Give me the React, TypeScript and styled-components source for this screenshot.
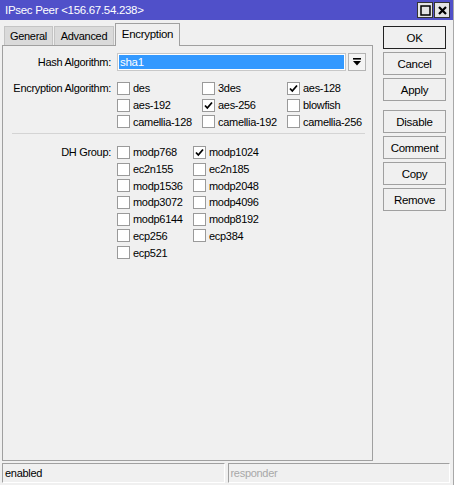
import React from 'react';
import styled, { createGlobalStyle } from 'styled-components';

const GlobalStyle = createGlobalStyle`
  html, body {
    margin: 0;
    padding: 0;
    background: #f0f0f0;
  }
  body {
    font-family: 'Liberation Sans', Arial, sans-serif;
    font-size: 11px;
    letter-spacing: -0.3px;
    color: #000;
  }
`;

type Item = { name: string; checked?: boolean };

const encryption: Item[] = [
  { name: 'des' },
  { name: '3des' },
  { name: 'aes-128', checked: true },
  { name: 'aes-192' },
  { name: 'aes-256', checked: true },
  { name: 'blowfish' },
  { name: 'camellia-128' },
  { name: 'camellia-192' },
  { name: 'camellia-256' },
];

const dhGroups: Item[] = [
  { name: 'modp768' },
  { name: 'modp1024', checked: true },
  { name: 'ec2n155' },
  { name: 'ec2n185' },
  { name: 'modp1536' },
  { name: 'modp2048' },
  { name: 'modp3072' },
  { name: 'modp4096' },
  { name: 'modp6144' },
  { name: 'modp8192' },
  { name: 'ecp256' },
  { name: 'ecp384' },
  { name: 'ecp521' },
];

const tabs = [
  { title: 'General', width: 49 },
  { title: 'Advanced', width: 60 },
  { title: 'Encryption', width: 65, active: true },
];

const buttons = [
  { title: 'OK', primary: true },
  { title: 'Cancel' },
  { title: 'Apply', gapAfter: true },
  { title: 'Disable' },
  { title: 'Comment' },
  { title: 'Copy' },
  { title: 'Remove' },
];

const CheckBox: React.FC<{ checked?: boolean; label: string }> = ({ checked, label }) => (
  <CheckRow>
    <Box>
      {checked && (
        <svg width='11' height='11' viewBox='0 0 11 11'>
          <path d='M2 5.5 L4.3 8 L9 2.5' fill='none' stroke='#000' strokeWidth='1.8' />
        </svg>
      )}
    </Box>
    <span>{label}</span>
  </CheckRow>
);

const App: React.FC = () => {
  return (
    <>
      <GlobalStyle />
      <Window>
        <TitleBar>
          <span>IPsec Peer &lt;156.67.54.238&gt;</span>
          <TitleButtons>
            <TitleButton>
              <svg width='11' height='11' viewBox='0 0 11 11'>
                <rect x='1' y='1' width='9' height='9' fill='none' stroke='#000' strokeWidth='1.5' />
              </svg>
            </TitleButton>
            <TitleButton>
              <svg width='11' height='11' viewBox='0 0 11 11'>
                <path d='M2 2 L9 9 M9 2 L2 9' stroke='#000' strokeWidth='2.2' />
              </svg>
            </TitleButton>
          </TitleButtons>
        </TitleBar>

        <Main>
          <LeftPane>
            <TabRow>
              {tabs.map((t) => (
                <Tab key={t.title} $active={t.active} $width={t.width}>
                  {t.title}
                </Tab>
              ))}
            </TabRow>
            <Panel>
              <FormRow>
                <Label>Hash Algorithm:</Label>
                <SelectWrap>
                  <SelectField>
                    <Selected>sha1</Selected>
                  </SelectField>
                  <DropButton>
                    <svg width='10' height='10' viewBox='0 0 10 10'>
                      <rect x='1' y='1' width='8' height='1.6' fill='#000' />
                      <polygon points='1,4 9,4 5,8.5' fill='#000' />
                    </svg>
                  </DropButton>
                </SelectWrap>
              </FormRow>

              <FormRow $top={9}>
                <Label $row>Encryption Algorithm:</Label>
                <CheckGrid $col={85}>
                  {encryption.map((i) => (
                    <CheckBox key={i.name} label={i.name} checked={i.checked} />
                  ))}
                </CheckGrid>
              </FormRow>

              <Separator />

              <FormRow $top={0}>
                <Label $row>DH Group:</Label>
                <CheckGrid $cols={2} $col={76}>
                  {dhGroups.map((i) => (
                    <CheckBox key={i.name} label={i.name} checked={i.checked} />
                  ))}
                </CheckGrid>
              </FormRow>
            </Panel>
          </LeftPane>

          <ButtonColumn>
            {buttons.map((b) => (
              <Button key={b.title} $primary={b.primary} $gapAfter={b.gapAfter}>
                {b.title}
              </Button>
            ))}
          </ButtonColumn>
        </Main>

        <StatusBar>
          <StatusField>enabled</StatusField>
          <StatusField $muted>responder</StatusField>
        </StatusBar>
      </Window>
    </>
  );
};

const Window = styled.div`
  width: 454px;
  height: 485px;
  display: flex;
  flex-direction: column;
  box-sizing: border-box;
  border-right: 1px solid #a8a8a8;
`;

const TitleBar = styled.div`
  height: 20px;
  flex: none;
  background: #5050c9;
  color: #fff;
  display: flex;
  align-items: center;
  justify-content: space-between;
  padding: 0 3px 0 5px;
  font-size: 11.5px;
`;

const TitleButtons = styled.div`
  display: flex;
  gap: 1px;
`;

const TitleButton = styled.div`
  width: 14px;
  height: 14px;
  border: 1px solid #333;
  background: #e4e4e4;
  display: flex;
  align-items: center;
  justify-content: center;
`;

const Main = styled.div`
  flex: 1;
  display: flex;
  padding-left: 2px;
  min-height: 0;
`;

const LeftPane = styled.div`
  width: 371px;
  display: flex;
  flex-direction: column;
  padding-bottom: 1px;
`;

const TabRow = styled.div`
  height: 25px;
  display: flex;
  align-items: flex-end;
  padding-left: 2px;
  gap: 1px;
  position: relative;
  z-index: 1;
`;

const Tab = styled.div<{ $active?: boolean; $width: number }>`
  width: ${(p) => p.$width}px;
  box-sizing: border-box;
  height: ${(p) => (p.$active ? 23 : 19)}px;
  margin-bottom: ${(p) => (p.$active ? -1 : 0)}px;
  border: 1px solid ${(p) => (p.$active ? '#a0a0a0' : '#c4c4c4')};
  border-bottom: none;
  background: ${(p) => (p.$active ? '#f0f0f0' : '#dadada')};
  display: flex;
  align-items: center;
  justify-content: center;
  padding-bottom: ${(p) => (p.$active ? 2 : 0)}px;
  font-size: ${(p) => (p.$active ? 11.5 : 11)}px;
`;

const Panel = styled.div`
  flex: 1;
  border: 1px solid #a0a0a0;
  padding: 7px 0 0 0;
`;

const FormRow = styled.div<{ $top?: number }>`
  display: flex;
  align-items: flex-start;
  margin-top: ${(p) => p.$top ?? 0}px;
`;

const Label = styled.div<{ $row?: boolean }>`
  width: 107px;
  margin-left: 1px;
  margin-right: 6px;
  text-align: right;
  flex: none;
  line-height: ${(p) => (p.$row ? '16.7px' : '18px')};
  white-space: nowrap;
`;

const SelectWrap = styled.div`
  display: flex;
  gap: 2px;
`;

const SelectField = styled.div`
  width: 229px;
  height: 18px;
  box-sizing: border-box;
  border: 1px solid #c8c8c8;
  background: #fff;
  padding: 1px;
  display: flex;
`;

const Selected = styled.div`
  flex: 1;
  background: #3399ff;
  color: #fff;
  line-height: 14px;
  padding-left: 1px;
  font-size: 11.5px;
`;

const DropButton = styled.div`
  width: 18px;
  height: 18px;
  box-sizing: border-box;
  border: 1px solid #b4b4b4;
  background: #f4f4f4;
  display: flex;
  align-items: center;
  justify-content: center;
`;

const CheckGrid = styled.div<{ $cols?: number; $col: number }>`
  display: grid;
  grid-template-columns: repeat(${(p) => p.$cols ?? 3}, ${(p) => p.$col}px);
  grid-auto-rows: 16.7px;
`;

const CheckRow = styled.div`
  display: flex;
  align-items: center;
  gap: 3px;
  white-space: nowrap;
`;

const Box = styled.span`
  width: 13px;
  height: 13px;
  box-sizing: border-box;
  border: 1px solid #9a9a9a;
  background: #fff;
  display: flex;
  align-items: center;
  justify-content: center;
  flex: none;
`;

const Separator = styled.div`
  height: 1px;
  background: #d4d4d4;
  margin: 3px 7px 10px 9px;
`;

const ButtonColumn = styled.div`
  display: flex;
  flex-direction: column;
  gap: 3px;
  margin-left: 10px;
  padding-top: 6px;
`;

const Button = styled.div<{ $primary?: boolean; $gapAfter?: boolean }>`
  width: 63px;
  height: 23px;
  box-sizing: border-box;
  border: 1px solid ${(p) => (p.$primary ? '#222' : '#a0a0a0')};
  background: #f0f0f0;
  display: flex;
  align-items: center;
  justify-content: center;
  font-size: 11.5px;
  margin-bottom: ${(p) => (p.$gapAfter ? 6 : 0)}px;
`;

const StatusBar = styled.div`
  height: 20px;
  flex: none;
  display: flex;
  gap: 3px;
  padding: 1px 3px 2px 2px;
`;

const StatusField = styled.div<{ $muted?: boolean }>`
  flex: 1;
  box-sizing: border-box;
  border-top: 1px solid #a0a0a0;
  border-left: 1px solid #a0a0a0;
  border-right: 1px solid #fff;
  border-bottom: 1px solid #fff;
  color: ${(p) => (p.$muted ? '#a8a8a8' : '#000')};
  padding-left: 2px;
  line-height: 18px;
`;

export default App;
